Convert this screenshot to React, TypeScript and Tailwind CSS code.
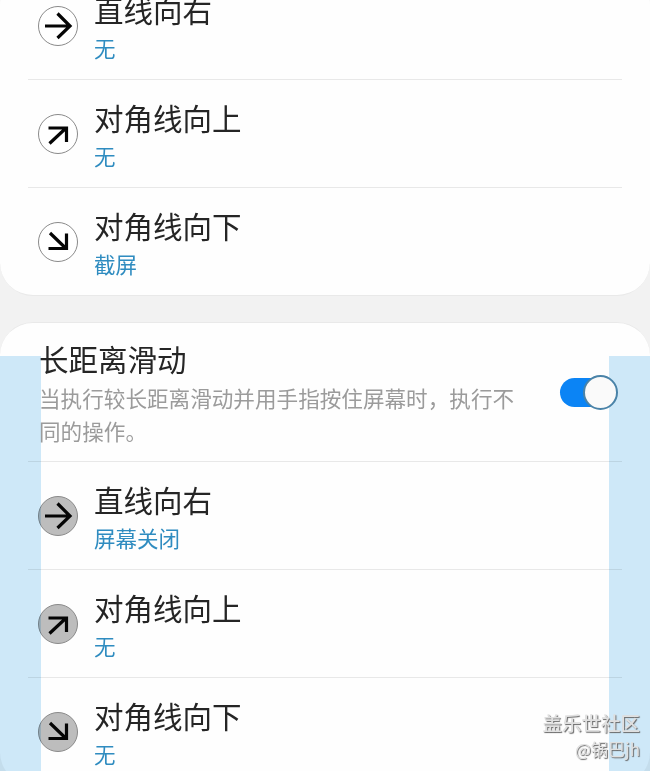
const cjk = "font-['Noto_Sans_CJK_SC','Noto_Sans',sans-serif]";

const arrows = {
  right: "M7 20H32M19.5 7.5L32 20L19.5 32",
  up: "M11.5 29.5L27 15M10.5 14H28.5V28",
  down: "M12 11L27 25.5M10.5 26.5H28.5V11.5",
};

type Dir = keyof typeof arrows;

function SwipeIcon({ dir, active }: { dir: Dir; active?: boolean }) {
  return (
    <div
      className={
        active
          ? "h-10 w-10 shrink-0 rounded-full border border-[#8a8a8a] bg-[#bdbdbd]"
          : "h-10 w-10 shrink-0 rounded-full border border-[#8a8a8a] bg-white"
      }
    >
      <svg viewBox="0 0 40 40" className="-m-px h-10 w-10" fill="none" stroke="#050505" strokeWidth="3.2">
        <path d={arrows[dir]} />
      </svg>
    </div>
  );
}

function Row({ dir, title, value, active }: { dir: Dir; title: string; value: string; active?: boolean }) {
  return (
    <div className="flex h-[107px] items-center gap-4 pl-[38px]">
      <SwipeIcon dir={dir} active={active} />
      <div className="flex flex-col pt-[2px]">
        <div className="text-[29.5px] leading-[38px] text-[#252525]">{title}</div>
        <div className="mt-[4px] text-[21.5px] leading-[32px] text-[#2f8cc0]">{value}</div>
      </div>
    </div>
  );
}

function Divider() {
  return <div className="mx-[28px] h-px bg-[#e8e8e8]" />;
}

export default function App() {
  return (
    <div className={`relative h-[771px] w-[650px] overflow-hidden bg-[#f2f2f2] ${cjk}`}>
      <div className="-mt-[28px] rounded-[33px] border-b border-[#e9e9e9] bg-[#fefefe]">
        <Row dir="right" title="直线向右" value="无" />
        <Divider />
        <Row dir="up" title="对角线向上" value="无" />
        <Divider />
        <Row dir="down" title="对角线向下" value="截屏" />
      </div>

      <div className="mt-[26px] rounded-[33px] border-t border-[#e9e9e9] bg-[#fefefe]">
        <div className="flex h-[138px] items-start justify-between pl-[39px] pr-[32px]">
          <div className="w-[482px] pt-[12px]">
            <div className="text-[29.5px] leading-[46px] text-[#252525]">长距离滑动</div>
            <div className="text-[21.6px] leading-[33px] text-[#9b9b9b]">
              当执行较长距离滑动并用手指按住屏幕时，执行不同的操作。
            </div>
          </div>
          <div className="relative z-20 mt-[51px] flex h-[36px] w-[58px] items-center">
            <div className="h-[29px] w-[50px] rounded-full bg-[#0b84f5]" />
            <div className="absolute right-0 top-px h-[35px] w-[35px] rounded-full border-2 border-[#4a83a8] bg-[#fafafa]" />
          </div>
        </div>
        <Divider />
        <Row dir="right" title="直线向右" value="屏幕关闭" active />
        <Divider />
        <Row dir="up" title="对角线向上" value="无" active />
        <Divider />
        <Row dir="down" title="对角线向下" value="无" active />
      </div>

      {/* blue guide strips laid over the screen */}
      <div className="absolute bottom-0 left-0 top-[356px] z-10 w-[41px] bg-[#cfe9f9] mix-blend-multiply" />
      <div className="absolute bottom-0 right-0 top-[356px] z-10 w-[41px] bg-[#cfe9f9] mix-blend-multiply" />

      {/* watermark */}
      <div className="absolute bottom-[11px] right-[10px] z-20 flex flex-col items-end [text-shadow:1px_1px_1px_#666] text-[#e0e0e0]">
        <div className="mb-[2px] text-[19.5px] leading-[26px] font-medium">盖乐世社区</div>
        <div className="text-[17px] leading-[22px]">@锅巴jh</div>
      </div>
    </div>
  );
}
